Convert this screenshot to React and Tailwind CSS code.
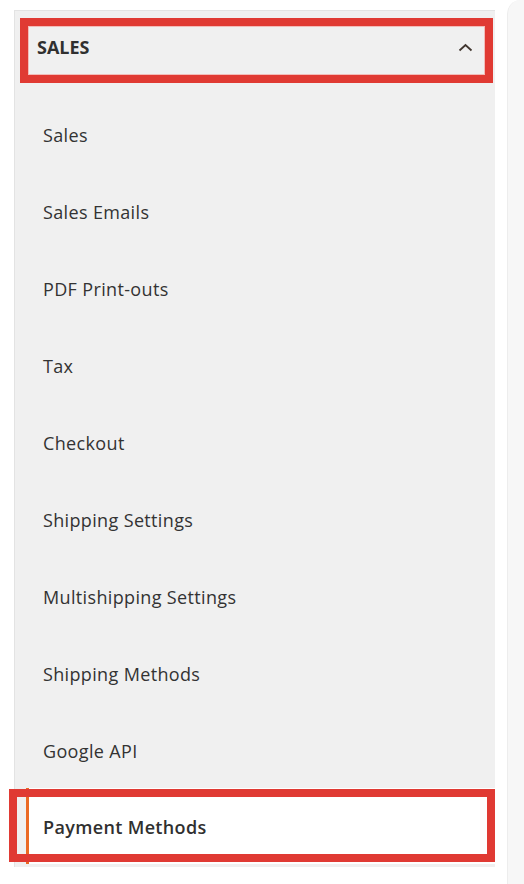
const ITEMS = [
  'Sales',
  'Sales Emails',
  'PDF Print-outs',
  'Tax',
  'Checkout',
  'Shipping Settings',
  'Multishipping Settings',
  'Shipping Methods',
  'Google API',
];

export default function App() {
  return (
    <div className="w-[524px] h-[884px] bg-white flex overflow-hidden font-['Open_Sans',sans-serif] text-[#333333]">
      <div className="w-[507px] shrink-0 pl-[14px] pt-[10px]">
        <div className="w-[481px] bg-[#f0f0f0] border-l border-t border-[#e3e3e3] pb-[3px]">
          {/* Section header, highlighted */}
          <div className="mt-[7px] ml-[5px] mr-[2px] h-[65px] border-[8px] border-[#e03a33]">
            <div className="h-full flex items-center justify-between pl-[8px] pr-[11px] pb-[6px] border border-[#f3bcb9]">
              <span className="text-[18px] font-bold text-[#303030]">SALES</span>
              <svg width="15" height="9" viewBox="0 0 15 9" fill="none">
                <path d="M1.5 7.5L7.5 2l6 5.5" stroke="#41362f" strokeWidth="1.8" />
              </svg>
            </div>
          </div>

          {/* Items */}
          <div className="mt-[14px]">
            {ITEMS.map((label) => (
              <div key={label} className="h-[77px] flex items-center pl-[28px] text-[18px] tracking-[0.35px]">
                {label}
              </div>
            ))}

            {/* Active item */}
            <div className="relative ml-[11px] h-[76px] -mt-[2px] bg-white border-l-[3px] border-[#eb6a24] flex items-center pl-[14px] pt-[2px] text-[18px] tracking-[0.35px] font-semibold text-[#303030]">
              Payment Methods
              <div className="absolute -left-[20px] right-0 top-[1px] h-[73px] border-[8px] border-[#e03a33] pointer-events-none" />
            </div>
          </div>
        </div>
      </div>
      <div className="flex-1 bg-[#f7f7f7] rounded-tl-[14px] border-l border-[#ededed]" />
    </div>
  );
}
